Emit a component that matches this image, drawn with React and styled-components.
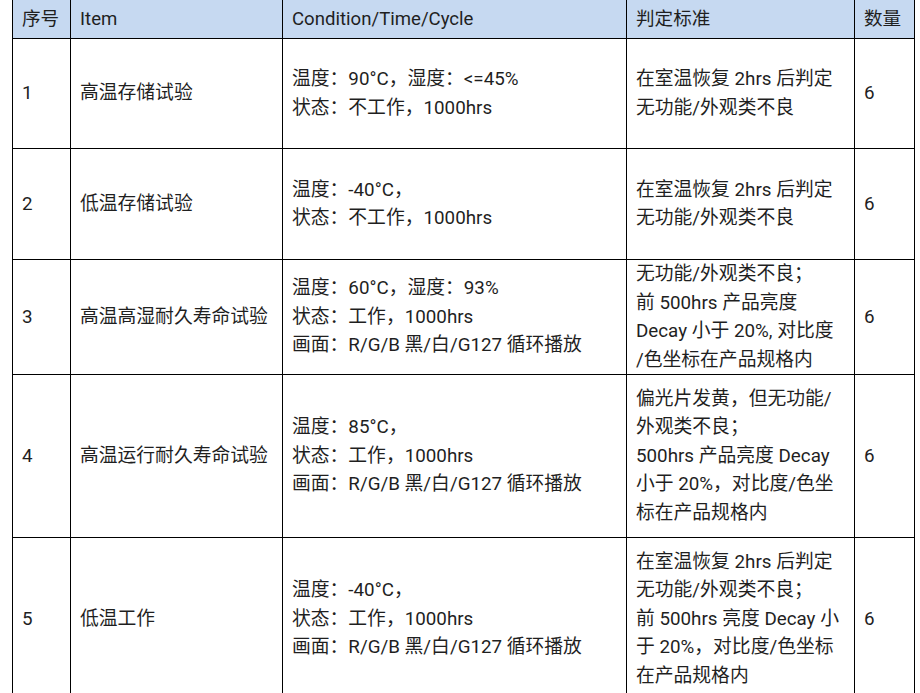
import React from 'react';
import styled, { createGlobalStyle } from 'styled-components';

const GlobalStyle = createGlobalStyle`
  html, body {
    margin: 0;
    padding: 0;
    background: #fff;
  }
  body {
    font-family: Roboto, "Noto Sans CJK SC", sans-serif;
    color: #1f1f1f;
  }
`;

const Page = styled.div`
  padding-left: 12px;
  margin-top: -1px;
  overflow: hidden;
  height: 694px;
`;

const Table = styled.table`
  border-collapse: collapse;
  table-layout: fixed;
  width: 902px;
  font-size: 18.8px;
  line-height: 28.5px;
`;

const HeadRow = styled.tr`
  height: 39px;
  background: #c6d9f1;
`;

const HeadCell = styled.th`
  border: 1px solid #000;
  text-align: left;
  font-weight: 400;
  padding: 0 9px;
  white-space: nowrap;
  vertical-align: middle;
  font-size: 18.6px;
`;

const Row = styled.tr`
  height: ${(p) => p.h}px;
`;

const Cell = styled.td`
  border: 1px solid #000;
  padding: 0 9px;
  vertical-align: middle;
  white-space: nowrap;
`;

const Line = styled.div`
  white-space: nowrap;
`;

const cols = [58, 212, 344, 228, 60];

const rows = [
  {
    no: '1',
    item: '高温存储试验',
    cond: ['温度：90°C，湿度：<=45%', '状态：不工作，1000hrs'],
    crit: ['在室温恢复 2hrs 后判定', '无功能/外观类不良'],
    qty: '6',
    h: 110,
  },
  {
    no: '2',
    item: '低温存储试验',
    cond: ['温度：-40°C，', '状态：不工作，1000hrs'],
    crit: ['在室温恢复 2hrs 后判定', '无功能/外观类不良'],
    qty: '6',
    h: 111,
  },
  {
    no: '3',
    item: '高温高湿耐久寿命试验',
    cond: ['温度：60°C，湿度：93%', '状态：工作，1000hrs', '画面：R/G/B 黑/白/G127 循环播放'],
    crit: ['无功能/外观类不良；', '前 500hrs 产品亮度', 'Decay 小于 20%, 对比度', '/色坐标在产品规格内'],
    qty: '6',
    h: 115,
  },
  {
    no: '4',
    item: '高温运行耐久寿命试验',
    cond: ['温度：85°C，', '状态：工作，1000hrs', '画面：R/G/B 黑/白/G127 循环播放'],
    crit: ['偏光片发黄，但无功能/', '外观类不良；', '500hrs 产品亮度 Decay', '小于 20%，对比度/色坐', '标在产品规格内'],
    qty: '6',
    h: 163,
  },
  {
    no: '5',
    item: '低温工作',
    cond: ['温度：-40°C，', '状态：工作，1000hrs', '画面：R/G/B 黑/白/G127 循环播放'],
    crit: ['在室温恢复 2hrs 后判定', '无功能/外观类不良；', '前 500hrs 亮度 Decay 小', '于 20%，对比度/色坐标', '在产品规格内'],
    qty: '6',
    h: 163,
  },
];

const App = () => (
  <Page>
    <GlobalStyle />
    <Table>
      <colgroup>
        {cols.map((w, i) => (
          <col key={i} style={{ width: w }} />
        ))}
      </colgroup>
      <thead>
        <HeadRow>
          <HeadCell>序号</HeadCell>
          <HeadCell>Item</HeadCell>
          <HeadCell>Condition/Time/Cycle</HeadCell>
          <HeadCell>判定标准</HeadCell>
          <HeadCell>数量</HeadCell>
        </HeadRow>
      </thead>
      <tbody>
        {rows.map((r) => (
          <Row key={r.no} h={r.h}>
            <Cell>{r.no}</Cell>
            <Cell>{r.item}</Cell>
            <Cell>
              {r.cond.map((l, i) => (
                <Line key={i}>{l}</Line>
              ))}
            </Cell>
            <Cell>
              {r.crit.map((l, i) => (
                <Line key={i}>{l}</Line>
              ))}
            </Cell>
            <Cell>{r.qty}</Cell>
          </Row>
        ))}
      </tbody>
    </Table>
  </Page>
);

export default App;
